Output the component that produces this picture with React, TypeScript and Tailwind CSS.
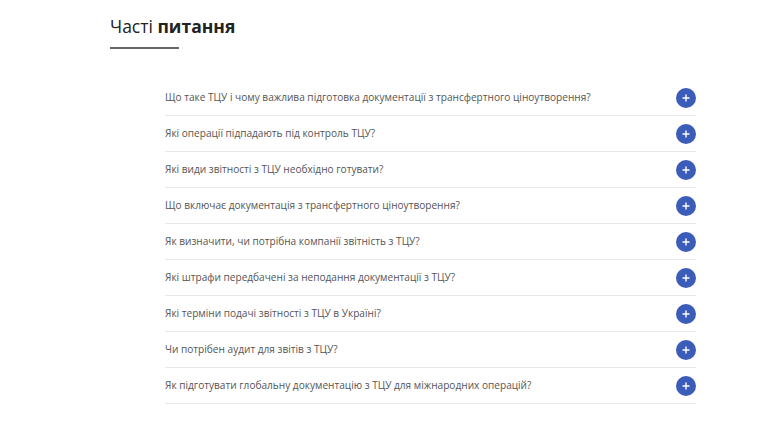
const questions = [
  "Що таке ТЦУ і чому важлива підготовка документації з трансфертного ціноутворення?",
  "Які операції підпадають під контроль ТЦУ?",
  "Які види звітності з ТЦУ необхідно готувати?",
  "Що включає документація з трансфертного ціноутворення?",
  "Як визначити, чи потрібна компанії звітність з ТЦУ?",
  "Які штрафи передбачені за неподання документації з ТЦУ?",
  "Які терміни подачі звітності з ТЦУ в Україні?",
  "Чи потрібен аудит для звітів з ТЦУ?",
  "Як підготувати глобальну документацію з ТЦУ для міжнародних операцій?",
];

function PlusButton() {
  return (
    <span className="flex h-5 w-5 shrink-0 items-center justify-center rounded-full bg-[#3b5cb8]">
      <svg width="8" height="8" viewBox="0 0 8 8" aria-hidden="true">
        <path d="M4 1v6M1 4h6" stroke="#fff" strokeWidth="1.4" strokeLinecap="round" />
      </svg>
    </span>
  );
}

export default function App() {
  return (
    <div className="min-h-[436px] w-full bg-white" style={{ fontFamily: "'Open Sans', sans-serif" }}>
      <div className="pl-[110px] pt-[14px]">
        <h2 className="text-[17.5px] leading-[24px] text-[#222]">
          Часті <span className="font-bold">питання</span>
        </h2>
        <div className="mt-[9px] h-[2px] w-[69px] bg-[#666]" />
      </div>
      <div className="ml-[165px] mt-[31px] w-[531px]">
        {questions.map((q) => (
          <div
            key={q}
            className="flex h-[36px] items-center justify-between border-b border-[#e8e8e8]"
          >
            <span className="pt-[1px] text-[10.1px] text-[#555]">{q}</span>
            <PlusButton />
          </div>
        ))}
      </div>
    </div>
  );
}
